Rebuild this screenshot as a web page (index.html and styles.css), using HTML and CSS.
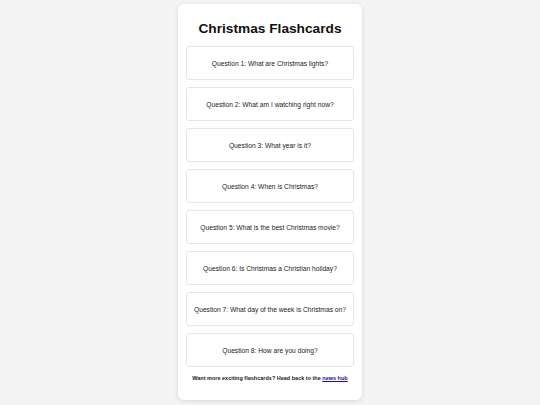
FILE: index.html
```html
<!DOCTYPE html>
<html lang="en">
<head>
    <meta charset="UTF-8">
    <title>Christmas Flashcards</title>

    <link rel="stylesheet" href="styles.css">
</head>
<body>

    <div class="container">
        <h1>Christmas Flashcards</h1>

        <div class="cards">
            <div class="card">Question 1: What are Christmas lights?</div>
            <div class="card">Question 2: What am I watching right now?</div>
            <div class="card">Question 3: What year is it?</div>
            <div class="card">Question 4: When is Christmas?</div>
            <div class="card">Question 5: What is the best Christmas movie?</div>
            <div class="card">Question 6: Is Christmas a Christian holiday?</div>
            <div class="card">Question 7: What day of the week is Christmas on?</div>
            <div class="card">Question 8: How are you doing?</div>
        </div>

        <p class="footer">Want more exciting flashcards? Head back to the <a href="#">news hub</a></p>
    </div>

</body>
</html>
```

FILE: styles.css
```css
html, body{
    height:100%;
}

body{
    margin: 0;
    background: #f4f4f4;
    font-family: "Liberation Sans", Arial, sans-serif;
    color: #111;
}

.container{
    width: 168px;
    margin: 4px auto 0;
    padding: 8px;
    background: white;
    border-radius: 6px;
    box-shadow: 0 1px 5px rgba(0, 0, 0, 0.12);
}

h1{
    margin: 9px 0;
    font-size: 13.7px;
    line-height: 16px;
    text-align: center;
    color: #111;
}

.cards{
    display: flex;
    flex-direction: column;
    gap: 7px;
}

.card{
    height: 32px;
    display: flex;
    align-items: center;
    justify-content: center;
    text-align: center;
    border: 1px solid #e6e6e6;
    border-radius: 3px;
    font-size: 6.7px;
    color: #222;
}

.footer{
    margin: 8px 0 10px;
    font-size: 5.5px;
    line-height: 7px;
    font-weight: bold;
    text-align: center;
    white-space: nowrap;
    color: #222;
}

.footer a{
    color: #1a0dab;
}
```
